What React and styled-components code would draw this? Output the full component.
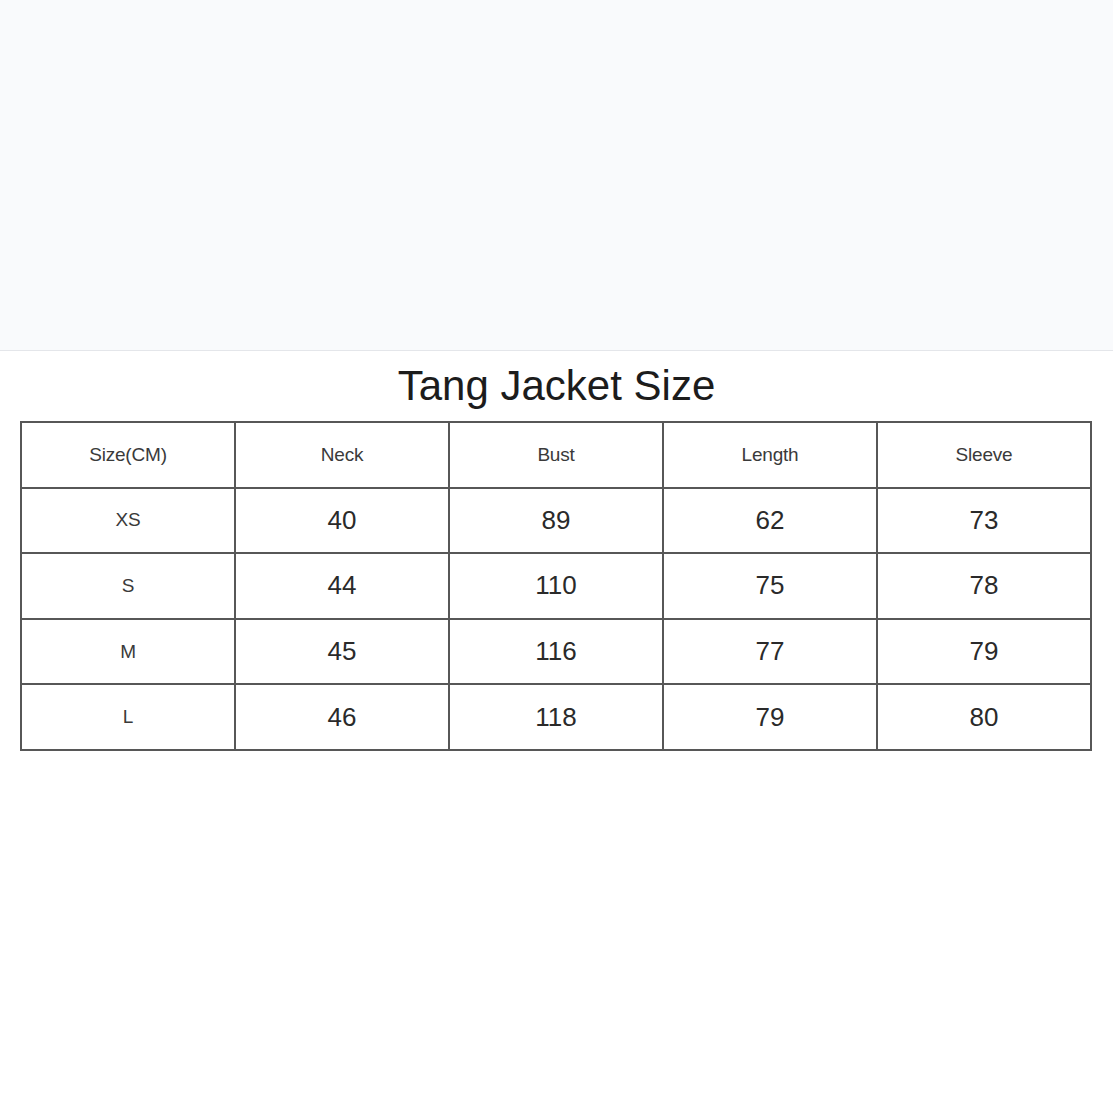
import React from "react";
import styled, { createGlobalStyle } from "styled-components";

const GlobalStyle = createGlobalStyle`
    html, body {
        margin: 0;
        padding: 0;
        background: #ffffff;
        font-family: "Liberation Sans", Arial, sans-serif;
    }
`
const Page = styled.div`
    width: 1113px;
    height: 1113px;
    display: flex;
    flex-direction: column;
    background: #ffffff;
`
const Banner = styled.div`
    height: 350px;
    flex-shrink: 0;
    background: #f9fafc;
    border-bottom: 1px solid #e4e6ea;
`
const Title = styled.h1`
    margin: 11px 0 11px;
    text-align: center;
    font-family: "Liberation Sans", Arial, sans-serif;
    font-size: 42px;
    font-weight: 400;
    line-height: 48px;
    color: #1c1c1c;
`
const Table = styled.table`
    margin: 0 21px 0 20px;
    width: 1072px;
    border-collapse: collapse;
    table-layout: fixed;
`
const Row = styled.tr`
    height: 65.6px;
`
const Cell = styled.td`
    border: 2px solid #575757;
    padding: 0;
    text-align: center;
    vertical-align: middle;
    font-family: "Liberation Sans", Arial, sans-serif;
    font-size: ${props => props.$small ? '19px' : '26px'};
    color: ${props => props.$small ? '#3a3a3a' : '#2a2a2a'};
    letter-spacing: ${props => props.$small ? '-0.2px' : '0'};
`

const headers = ['Size(CM)', 'Neck', 'Bust', 'Length', 'Sleeve'];

const rows = [
    ['XS', '40', '89', '62', '73'],
    ['S', '44', '110', '75', '78'],
    ['M', '45', '116', '77', '79'],
    ['L', '46', '118', '79', '80'],
];

export default function App() {
    return (
        <Page>
            <GlobalStyle />
            <Banner />
            <Title>Tang Jacket Size</Title>
            <Table>
                <tbody>
                    <Row>
                        {headers.map((h) => (
                            <Cell key={h} $small>{h}</Cell>
                        ))}
                    </Row>
                    {rows.map((row) => (
                        <Row key={row[0]}>
                            {row.map((value, i) => (
                                <Cell key={i} $small={i === 0}>{value}</Cell>
                            ))}
                        </Row>
                    ))}
                </tbody>
            </Table>
        </Page>
    );
}
